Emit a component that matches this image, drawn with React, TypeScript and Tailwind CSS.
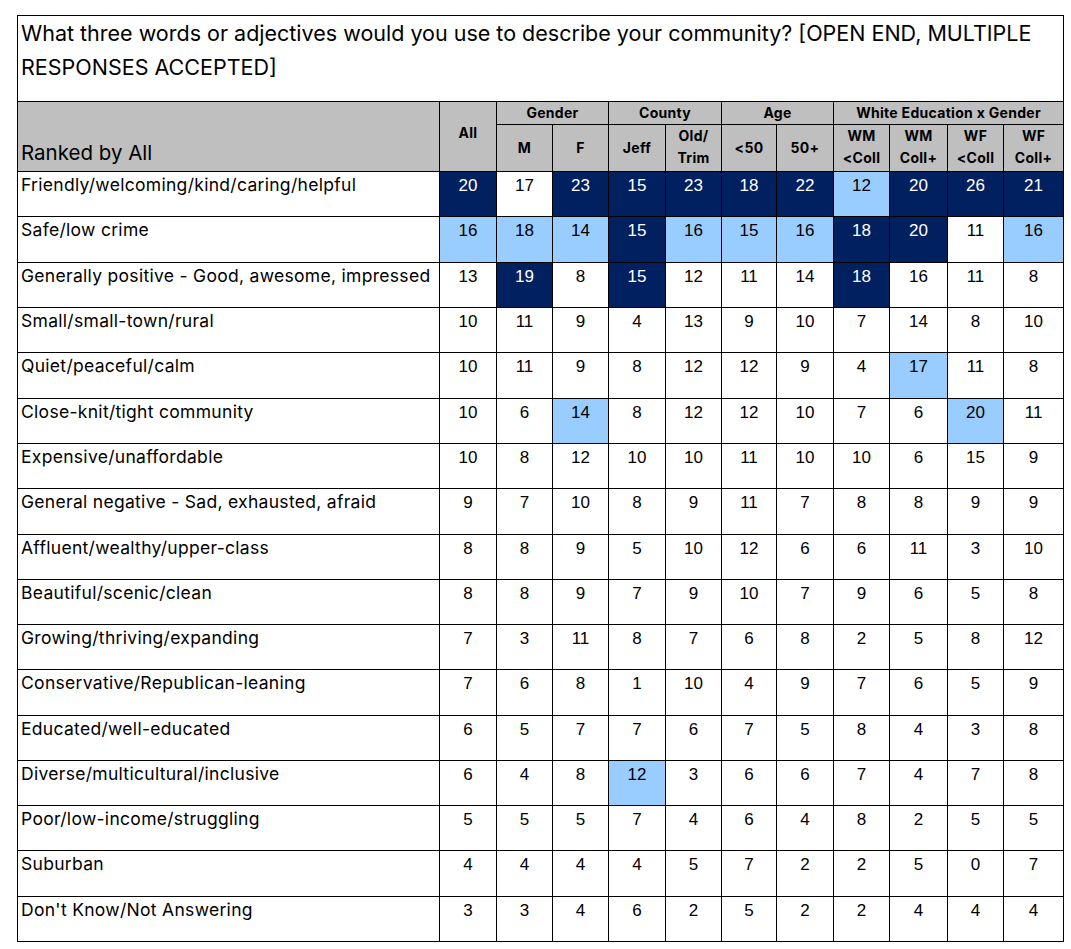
import React from 'react'

type Shade = 'D' | 'L' | 'W'

const rows: { label: string; values: number[]; shades?: string }[] = [
    { label: 'Friendly/welcoming/kind/caring/helpful', values: [20, 17, 23, 15, 23, 18, 22, 12, 20, 26, 21], shades: 'DWDDDDDLDDD' },
    { label: 'Safe/low crime', values: [16, 18, 14, 15, 16, 15, 16, 18, 20, 11, 16], shades: 'LLLDLLLDDWL' },
    { label: 'Generally positive - Good, awesome, impressed', values: [13, 19, 8, 15, 12, 11, 14, 18, 16, 11, 8], shades: 'WDWDWWWDWWW' },
    { label: 'Small/small-town/rural', values: [10, 11, 9, 4, 13, 9, 10, 7, 14, 8, 10] },
    { label: 'Quiet/peaceful/calm', values: [10, 11, 9, 8, 12, 12, 9, 4, 17, 11, 8], shades: 'WWWWWWWWLWW' },
    { label: 'Close-knit/tight community', values: [10, 6, 14, 8, 12, 12, 10, 7, 6, 20, 11], shades: 'WWLWWWWWWLW' },
    { label: 'Expensive/unaffordable', values: [10, 8, 12, 10, 10, 11, 10, 10, 6, 15, 9] },
    { label: 'General negative - Sad, exhausted, afraid', values: [9, 7, 10, 8, 9, 11, 7, 8, 8, 9, 9] },
    { label: 'Affluent/wealthy/upper-class', values: [8, 8, 9, 5, 10, 12, 6, 6, 11, 3, 10] },
    { label: 'Beautiful/scenic/clean', values: [8, 8, 9, 7, 9, 10, 7, 9, 6, 5, 8] },
    { label: 'Growing/thriving/expanding', values: [7, 3, 11, 8, 7, 6, 8, 2, 5, 8, 12] },
    { label: 'Conservative/Republican-leaning', values: [7, 6, 8, 1, 10, 4, 9, 7, 6, 5, 9] },
    { label: 'Educated/well-educated', values: [6, 5, 7, 7, 6, 7, 5, 8, 4, 3, 8] },
    { label: 'Diverse/multicultural/inclusive', values: [6, 4, 8, 12, 3, 6, 6, 7, 4, 7, 8], shades: 'WWWLWWWWWWW' },
    { label: 'Poor/low-income/struggling', values: [5, 5, 5, 7, 4, 6, 4, 8, 2, 5, 5] },
    { label: 'Suburban', values: [4, 4, 4, 4, 5, 7, 2, 2, 5, 0, 7] },
    { label: "Don't Know/Not Answering", values: [3, 3, 4, 6, 2, 5, 2, 2, 4, 4, 4] },
]

const rowHeights = ['h-[45px]', 'h-[46px]', 'h-[45px]', 'h-[45px]', 'h-[46px]', 'h-[45px]', 'h-[45px]', 'h-[46px]', 'h-[45px]', 'h-[45px]', 'h-[45px]', 'h-[46px]', 'h-[45px]', 'h-[45px]', 'h-[45px]', 'h-[46px]', 'h-[45px]']

const colWidths = ['w-[422px]', 'w-[57px]', 'w-[56px]', 'w-[56px]', 'w-[57px]', 'w-[56px]', 'w-[55px]', 'w-[57px]', 'w-[56px]', 'w-[58px]', 'w-[56px]', 'w-[60px]']

const shadeClass: Record<Shade, string> = {
    D: 'bg-[#002060] text-white',
    L: 'bg-[#99ccff] text-black',
    W: 'bg-white text-black',
}

const head = 'border border-black bg-[#bfbfbf] text-[14px] tracking-[0.3px] font-bold text-center leading-[22px] align-middle'

function App() {
    return (
        <div className="min-h-screen bg-white pt-[15px] pl-[17px] font-['Inter','Noto_Sans',sans-serif] text-black">
            <table className="table-fixed border-collapse w-[1047px]">
                <colgroup>
                    {colWidths.map((w, i) => <col key={i} className={w} />)}
                </colgroup>
                <tbody>
                    <tr className="h-[86px]">
                        <td colSpan={12} className="border border-black align-top px-[3px] pt-0 text-[21.5px] leading-[34px]">
                            What three words or adjectives would you use to describe your community? [OPEN END, MULTIPLE RESPONSES ACCEPTED]
                        </td>
                    </tr>
                    <tr className="h-[23px]">
                        <td rowSpan={2} className="border border-black bg-[#bfbfbf] align-bottom px-[3px] pb-[5px] text-[20.5px] leading-[26px]">Ranked by All</td>
                        <td rowSpan={2} className={`${head} pb-[8px]`}>All</td>
                        <td colSpan={2} className={head}>Gender</td>
                        <td colSpan={2} className={head}>County</td>
                        <td colSpan={2} className={head}>Age</td>
                        <td colSpan={4} className={head}>White Education x Gender</td>
                    </tr>
                    <tr className="h-[47px]">
                        <td className={head}>M</td>
                        <td className={head}>F</td>
                        <td className={head}>Jeff</td>
                        <td className={`${head} pb-[2px]`}>Old/<br />Trim</td>
                        <td className={head}>&lt;50</td>
                        <td className={head}>50+</td>
                        <td className={`${head} pb-[2px]`}>WM<br />&lt;Coll</td>
                        <td className={`${head} pb-[2px]`}>WM<br />Coll+</td>
                        <td className={`${head} pb-[2px]`}>WF<br />&lt;Coll</td>
                        <td className={`${head} pb-[2px]`}>WF<br />Coll+</td>
                    </tr>
                    {rows.map((r, ri) => (
                        <tr key={r.label} className={rowHeights[ri]}>
                            <td className="border border-black align-top px-[3px] pt-[1px] text-[17.5px] tracking-[0.3px] leading-[24px] whitespace-nowrap">{r.label}</td>
                            {r.values.map((v, ci) => {
                                const s = (r.shades ? r.shades[ci] : 'W') as Shade
                                return (
                                    <td key={ci} className={`border border-black align-top text-center pt-[3px] font-['Liberation_Sans',Arial,sans-serif] text-[17px] leading-[22px] ${shadeClass[s]}`}>
                                        {v}
                                    </td>
                                )
                            })}
                        </tr>
                    ))}
                </tbody>
            </table>
        </div>
    )
}

export default App
